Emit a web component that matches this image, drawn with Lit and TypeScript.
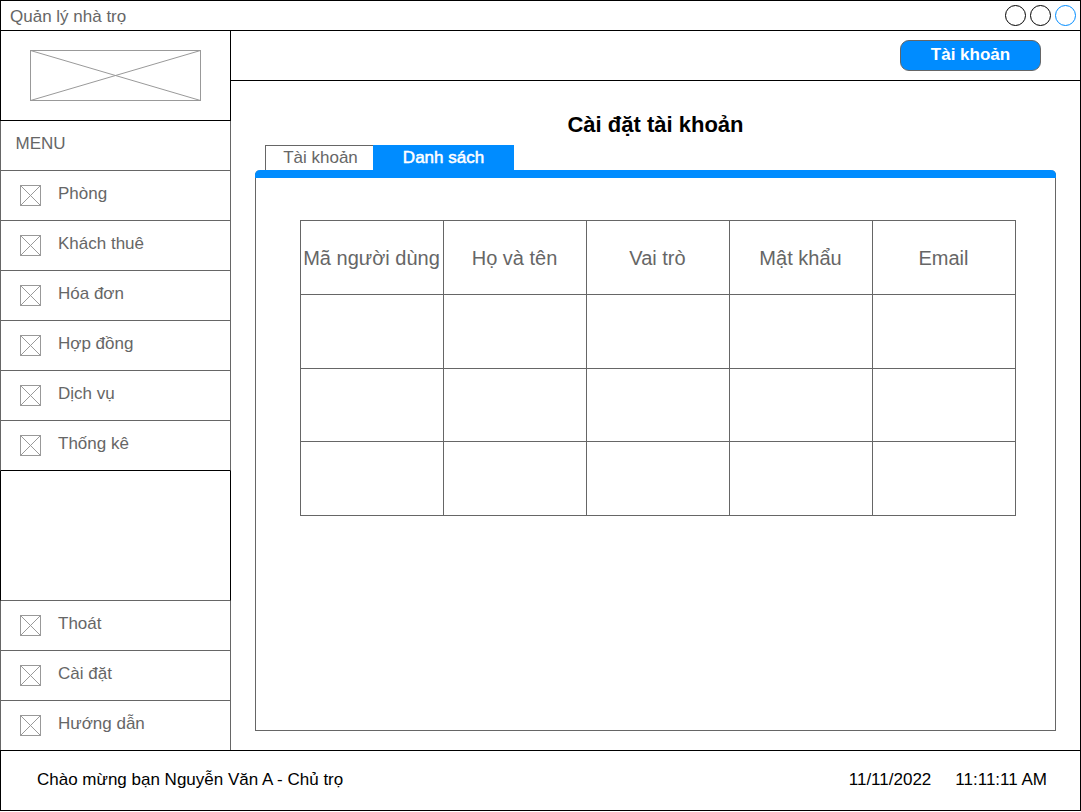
import { LitElement, html, css, svg } from "lit";
import { customElement, property } from "lit/decorators.js";

@customElement("crossed-box")
class CrossedBox extends LitElement {
  @property({ type: Number }) w = 20;
  @property({ type: Number }) h = 20;

  static styles = css`
    :host { display: block; flex: none; }
    .box { display: block; fill: #fff; stroke: #999; stroke-width: 1; }
  `;

  render() {
    const { w, h } = this;
    return html`<svg class="box" width=${w + 1} height=${h + 1} viewBox="0 0 ${w + 1} ${h + 1}">
      ${svg`<rect x="0.5" y="0.5" width=${w} height=${h} />
      <path d="M0.5 0.5L${w + 0.5} ${h + 0.5}M${w + 0.5} 0.5L0.5 ${h + 0.5}" />`}
    </svg>`;
  }
}

@customElement("app-root")
class AppRoot extends LitElement {
  private mainMenu = ["Phòng", "Khách thuê", "Hóa đơn", "Hợp đồng", "Dịch vụ", "Thống kê"];
  private footMenu = ["Thoát", "Cài đặt", "Hướng dẫn"];
  private columns = ["Mã người dùng", "Họ và tên", "Vai trò", "Mật khẩu", "Email"];
  private rows = [0, 1, 2];

  static styles = css`
    :host {
      display: block;
      width: 1081px;
      height: 812px;
      background: #fff;
      font-family: "Liberation Sans", Arial, sans-serif;
      font-size: 17px;
      line-height: 20px;
      color: #666;
      white-space: nowrap;
    }
    * { box-sizing: border-box; }
    .frame {
      display: grid;
      grid-template-rows: 31px 719px 61px;
      height: 811px;
    }
    .titlebar {
      display: flex;
      align-items: center;
      justify-content: space-between;
      border: 1px solid #000;
      padding: 0 4px 0 9px;
    }
    .app-name { padding-top: 2px; }
    .dots { display: flex; gap: 4px; }
    .dot { width: 21px; height: 21px; border: 1px solid #000; border-radius: 50%; }
    .dot.blue { border-color: #008cff; }
    .body { display: grid; grid-template-columns: 231px 850px; }
    .sidebar { display: flex; flex-direction: column; }
    .logo {
      height: 90px;
      border: 1px solid #000;
      border-top: 0;
      padding: 19px 0 0 29px;
    }
    .item {
      display: flex;
      height: 50px;
      border: 1px solid #666;
      border-top: 0;
      padding: 14px 0 0 19px;
      gap: 17px;
    }
    .item.menu { padding: 13px 0 0 14.5px; }
    .item.last { border-bottom-color: #000; }
    .item.end { height: 49px; border-bottom: 0; }
    .label { margin-top: -1px; }
    .blank {
      height: 130px;
      border: solid #000;
      border-width: 0 1px;
      border-bottom: 1px solid #666;
    }
    .content { display: flex; flex-direction: column; border-right: 1px solid #000; }
    .topbar {
      display: flex;
      justify-content: flex-end;
      height: 50px;
      border-bottom: 1px solid #000;
      padding: 9px 39px 0 0;
    }
    .account {
      width: 141px;
      height: 31px;
      border: 1px solid #666;
      border-radius: 9px;
      background: #008cff;
      color: #fff;
      font-weight: bold;
      line-height: 20px;
      padding-top: 4px;
      text-align: center;
    }
    .heading {
      margin: 31px 0 0;
      text-align: center;
      color: #000;
      font-size: 22px;
      line-height: 25px;
      font-weight: bold;
    }
    .tabs { display: flex; margin: 8px 0 0 34px; height: 25px; }
    .tab {
      width: 108px;
      border: 1px solid #666;
      border-width: 1px 0 0 1px;
      padding: 2px 0 0 2px;
      text-align: center;
    }
    .tab.active {
      width: 141px;
      border: 0;
      padding: 3px 0 0;
      background: #008cff;
      color: #fff;
      -webkit-text-stroke: 0.5px #fff;
    }
    .panel {
      width: 801px;
      height: 561px;
      margin-left: 24px;
      border: 1px solid #666;
      border-top: 0;
      border-radius: 5px 5px 0 0;
    }
    .bar {
      height: 8px;
      margin: 0 -1px;
      border-radius: 5px 5px 0 0;
      background: #008cff;
    }
    .table {
      display: grid;
      grid-template-columns: repeat(5, 143px);
      grid-template-rows: 74px 74px 73px 74px;
      width: 716px;
      margin: 42px 0 0 44px;
      border: solid #666;
      border-width: 1px 0 0 1px;
    }
    .cell {
      display: flex;
      align-items: center;
      justify-content: center;
      border: solid #666;
      border-width: 0 1px 1px 0;
      padding-right: 1px;
      font-size: 20px;
    }
    .footer {
      display: flex;
      align-items: center;
      border: 1px solid #000;
      color: #000;
      padding: 0 33px 2px 36px;
    }
    .date { margin: 0 24px 0 auto; }
  `;

  private item(label: string, extra = "") {
    return html`<div class="item ${extra}"><crossed-box></crossed-box><span class="label">${label}</span></div>`;
  }

  render() {
    return html`
      <div class="frame">
        <header class="titlebar">
          <span class="app-name">Quản lý nhà trọ</span>
          <div class="dots">
            <div class="dot"></div>
            <div class="dot"></div>
            <div class="dot blue"></div>
          </div>
        </header>
        <div class="body">
          <nav class="sidebar">
            <div class="logo"><crossed-box .w=${170} .h=${50}></crossed-box></div>
            <div class="item menu">MENU</div>
            ${this.mainMenu.map((m, i) => this.item(m, i === this.mainMenu.length - 1 ? "last" : ""))}
            <div class="blank"></div>
            ${this.footMenu.map((m, i) => this.item(m, i === this.footMenu.length - 1 ? "end" : ""))}
          </nav>
          <main class="content">
            <div class="topbar"><div class="account">Tài khoản</div></div>
            <h1 class="heading">Cài đặt tài khoản</h1>
            <div class="tabs">
              <div class="tab">Tài khoản</div>
              <div class="tab active">Danh sách</div>
            </div>
            <section class="panel">
              <div class="bar"></div>
              <div class="table">
                ${this.columns.map((c) => html`<div class="cell">${c}</div>`)}
                ${this.rows.map(() => this.columns.map(() => html`<div class="cell"></div>`))}
              </div>
            </section>
          </main>
        </div>
        <footer class="footer">
          <span>Chào mừng bạn Nguyễn Văn A - Chủ trọ</span>
          <span class="date">11/11/2022</span>
          <span>11:11:11 AM</span>
        </footer>
      </div>
    `;
  }
}
